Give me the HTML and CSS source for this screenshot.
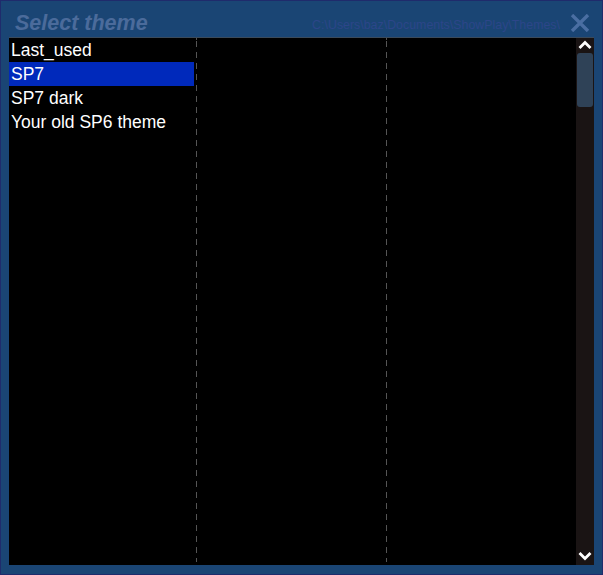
FILE: index.html
```html
<!DOCTYPE html>
<html>
<head>
<meta charset="utf-8">
<link rel="stylesheet" href="styles.css">
</head>
<body>
<div class="dialog">
  <div class="header">
    <div class="title">Select theme</div>
    <div class="path">C:\Users\baz\Documents\ShowPlay\Themes\</div>
    <svg class="close" width="20" height="18" viewBox="0 0 20 18">
      <path d="M2 1 L18 17 M18 1 L2 17" stroke="#4a6ea2" stroke-width="3.4" fill="none"/>
    </svg>
  </div>
  <div class="body">
    <div class="list">
      <div class="col first">
        <div class="row">Last_used</div>
        <div class="row selected">SP7</div>
        <div class="row">SP7 dark</div>
        <div class="row">Your old SP6 theme</div>
      </div>
      <div class="divider"></div>
      <div class="col second"></div>
      <div class="divider"></div>
      <div class="col third"></div>
    </div>
    <div class="scrollbar">
      <svg class="arrow" width="18" height="12" viewBox="0 0 18 12">
        <path d="M3.5 9 L9 3.5 L14.5 9" stroke="#ffffff" stroke-width="2.8" fill="none"/>
      </svg>
      <div class="track">
        <div class="thumb"></div>
      </div>
      <svg class="arrow" width="18" height="12" viewBox="0 0 18 12">
        <path d="M3.5 3 L9 8.5 L14.5 3" stroke="#ffffff" stroke-width="2.8" fill="none"/>
      </svg>
    </div>
  </div>
</div>
</body>
</html>
```
FILE: styles.css
```css
html, body {
  margin: 0;
  padding: 0;
  background: #19436f;
}

.dialog {
  width: 603px;
  height: 575px;
  box-sizing: border-box;
  border: 1px solid #1f2b6c;
  background: #1a4574;
  padding: 0 8px 9px 8px;
  display: flex;
  flex-direction: column;
  font-family: "Liberation Sans", Arial, sans-serif;
}

.header {
  height: 28px;
  padding-top: 8px;
  display: flex;
  align-items: center;
  flex-shrink: 0;
}

.title {
  font-size: 21.5px;
  font-weight: bold;
  font-style: italic;
  color: #4b6b9b;
  padding-left: 6px;
  flex: 1;
  white-space: nowrap;
}

.path {
  font-size: 12.4px;
  color: #2c4689;
  padding-top: 3px;
  margin-right: 10px;
  white-space: nowrap;
}

.close {
  margin-right: 4px;
}

.body {
  flex: 1;
  display: flex;
  border-top: 1px solid #3b4a5a;
  min-height: 0;
}

.list {
  flex: 1;
  background: #000;
  display: flex;
}

.col.first {
  width: 187px;
}

.col.second {
  width: 189px;
}

.col.third {
  flex: 1;
}

.divider {
  width: 1px;
  background: repeating-linear-gradient(to bottom, #555555 0px, #555555 6px, transparent 6px, transparent 11px);
  background-position: 0 3px;
  margin-bottom: 3px;
}

.row {
  height: 24px;
  line-height: 24px;
  font-size: 17.5px;
  color: #ffffff;
  padding-left: 2px;
  margin-right: 2px;
  white-space: nowrap;
}

.row.selected {
  background: #0029bb;
}

.scrollbar {
  width: 18px;
  background: #1a1414;
  display: flex;
  flex-direction: column;
  align-items: center;
}

.arrow {
  flex-shrink: 0;
  display: block;
  margin-top: 1px;
}

.track {
  flex: 1;
  width: 100%;
  padding: 2px 1px;
  box-sizing: border-box;
}

.thumb {
  height: 54px;
  background: #2f4257;
  border-radius: 3px;
}

.scrollbar .arrow:last-child {
  margin-top: 0;
  margin-bottom: 3px;
}
```
